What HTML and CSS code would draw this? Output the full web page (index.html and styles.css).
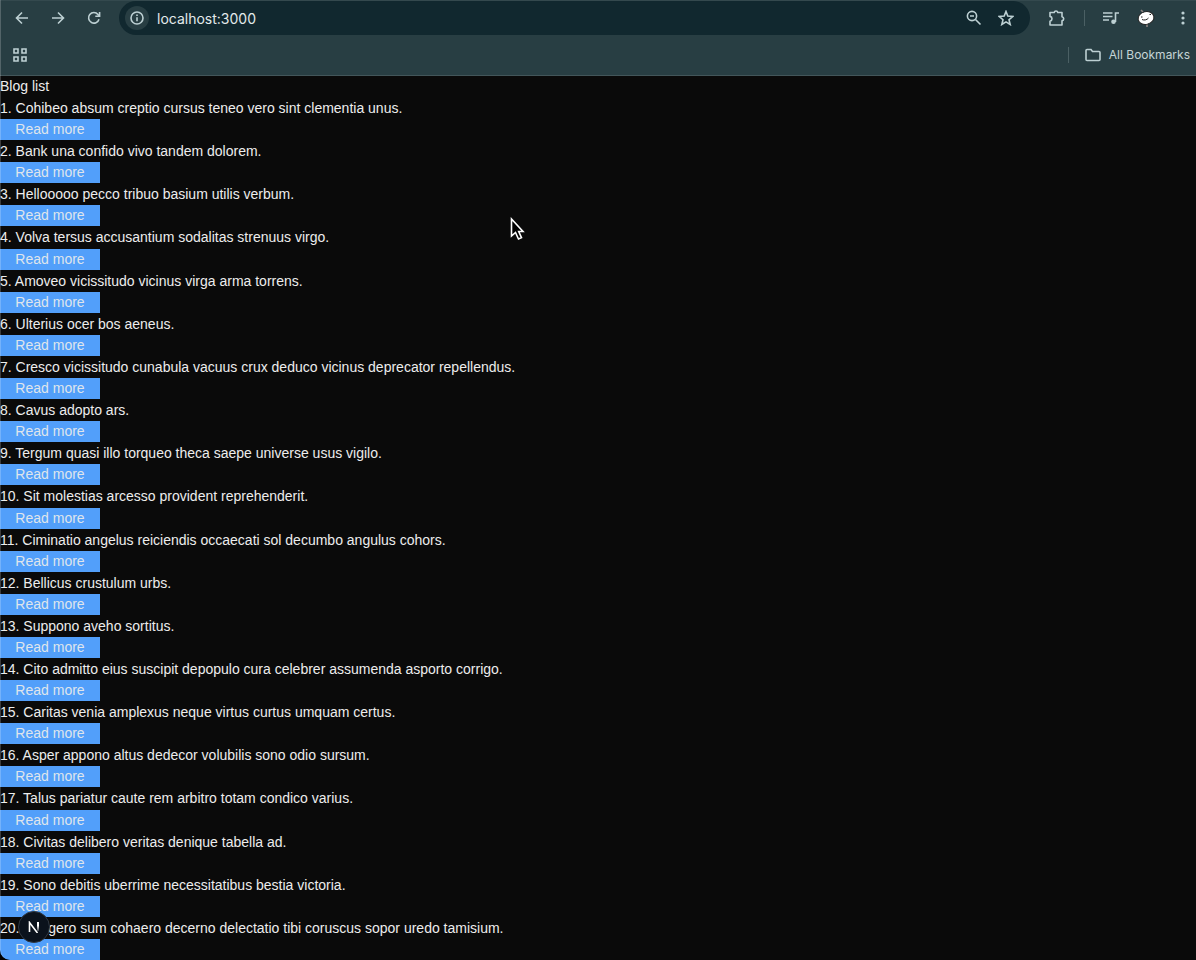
FILE: index.html
```html
<!DOCTYPE html>
<html lang="en">
<head>
<meta charset="utf-8">
<title>Blog list</title>
<link rel="stylesheet" href="styles.css">
</head>
<body>
<div class="window">
  <header class="chrome">
    <div class="toolbar">
      <nav class="nav" aria-label="History">
        <button class="icon-btn" aria-label="Back"><svg width="14" height="14" viewBox="0 0 14 14"><path d="M13 7H2M7 1.500 1.500 7 7 12.500"/></svg></button>
        <button class="icon-btn" aria-label="Forward"><svg width="14" height="14" viewBox="0 0 14 14"><path d="M1 7h11M7 1.500 12.500 7 7 12.500"/></svg></button>
        <button class="icon-btn" aria-label="Reload"><svg width="14" height="14" viewBox="0 0 14 14"><path d="M12 8.200A5.300 5.300 0 1 1 11 3.500L12.500 5M12.600 1v4.300H8.300"/></svg></button>
      </nav>
      <div class="omnibox">
        <button class="site-info" aria-label="View site information"><svg width="14" height="14" viewBox="0 0 14 14"><circle cx="7" cy="7" r="6"/><path d="M7 6.300v4M7 3.500v1.600"/></svg></button>
        <input class="address" type="text" aria-label="Address" value="localhost:3000">
        <button class="icon-btn" aria-label="Zoom"><svg width="16" height="16" viewBox="0 0 16 16"><circle cx="6" cy="6" r="4.600"/><path d="m9.500 9.500 5 5M4 6h4"/></svg></button>
        <button class="icon-btn" aria-label="Bookmark this tab"><svg width="16" height="16" viewBox="0 0 16 16"><path d="m8 1.500 1.800 4.600 4.900.4-3.700 3.200 1.200 4.800L8 11.900l-4.200 2.600L5 9.700 1.300 6.500l4.900-.4z"/></svg></button>
      </div>
      <div class="tools">
        <button class="icon-btn" aria-label="Extensions"><svg width="18" height="18" viewBox="0 0 18 18"><path d="M2 3.500h4.200q.3-1.500 1.800-1.500t1.800 1.500H14v4.200q1.700.3 1.700 2T14 11.700V16H2v-3.800q2-.5 2-2.400T2 7.400z" stroke-linejoin="round"/></svg></button>
        <span class="divider"></span>
        <button class="icon-btn" aria-label="Media controls"><svg width="16" height="14" viewBox="0 0 16 14"><path d="M0 2h9.500M0 5.500h9.500M0 9h6M12.500 11V2H16"/><circle class="solid" cx="10.500" cy="10.700" r="2.300"/></svg></button>
        <button class="icon-btn" aria-label="Profile"><svg width="18" height="18" viewBox="0 0 18 18"><path class="leaf" d="m4 1 2 2M10 14v4"/><ellipse class="face" cx="9" cy="9" rx="8" ry="6.300" transform="rotate(-14 9 9)"/><path class="smile" d="M5 10.500c2 1 5 .5 6.500-1.500M4 8h1.500M12.500 5.500h1.500"/></svg></button>
      </div>
      <button class="icon-btn menu" aria-label="Menu"><svg width="4" height="14" viewBox="0 0 4 14"><g class="solid"><circle cx="2" cy="2" r="1.600"/><circle cx="2" cy="7" r="1.600"/><circle cx="2" cy="12" r="1.600"/></g></svg></button>
    </div>
    <div class="bookmarks">
      <button class="icon-btn" aria-label="Apps"><svg width="14" height="14" viewBox="0 0 14 14"><path d="M1 1h4v4H1zM9 1h4v4H9zM1 9h4v4H1zM9 9h4v4H9z"/></svg></button>
      <span class="spacer"></span>
      <span class="divider"></span>
      <button class="all-bookmarks"><svg width="16" height="14" viewBox="0 0 16 14"><path d="M1 11.500v-9q0-1 1-1h4l1.500 2H14q1 0 1 1v7q0 1-1 1H2q-1 0-1-1z"/></svg>All Bookmarks</button>
    </div>
  </header>
  <main class="page">
    <h1 class="title">Blog list</h1>
    <div class="posts">
      <article class="post"><p>1. Cohibeo absum creptio cursus teneo vero sint clementia unus.</p><button class="more">Read more</button></article>
      <article class="post"><p>2. Bank una confido vivo tandem dolorem.</p><button class="more">Read more</button></article>
      <article class="post"><p>3. Hellooooo pecco tribuo basium utilis verbum.</p><button class="more">Read more</button></article>
      <article class="post"><p>4. Volva tersus accusantium sodalitas strenuus virgo.</p><button class="more">Read more</button></article>
      <article class="post"><p>5. Amoveo vicissitudo vicinus virga arma torrens.</p><button class="more">Read more</button></article>
      <article class="post"><p>6. Ulterius ocer bos aeneus.</p><button class="more">Read more</button></article>
      <article class="post"><p>7. Cresco vicissitudo cunabula vacuus crux deduco vicinus deprecator repellendus.</p><button class="more">Read more</button></article>
      <article class="post"><p>8. Cavus adopto ars.</p><button class="more">Read more</button></article>
      <article class="post"><p>9. Tergum quasi illo torqueo theca saepe universe usus vigilo.</p><button class="more">Read more</button></article>
      <article class="post"><p>10. Sit molestias arcesso provident reprehenderit.</p><button class="more">Read more</button></article>
      <article class="post"><p>11. Ciminatio angelus reiciendis occaecati sol decumbo angulus cohors.</p><button class="more">Read more</button></article>
      <article class="post"><p>12. Bellicus crustulum urbs.</p><button class="more">Read more</button></article>
      <article class="post"><p>13. Suppono aveho sortitus.</p><button class="more">Read more</button></article>
      <article class="post"><p>14. Cito admitto eius suscipit depopulo cura celebrer assumenda asporto corrigo.</p><button class="more">Read more</button></article>
      <article class="post"><p>15. Caritas venia amplexus neque virtus curtus umquam certus.</p><button class="more">Read more</button></article>
      <article class="post"><p>16. Asper appono altus dedecor volubilis sono odio sursum.</p><button class="more">Read more</button></article>
      <article class="post"><p>17. Talus pariatur caute rem arbitro totam condico varius.</p><button class="more">Read more</button></article>
      <article class="post"><p>18. Civitas delibero veritas denique tabella ad.</p><button class="more">Read more</button></article>
      <article class="post"><p>19. Sono debitis uberrime necessitatibus bestia victoria.</p><button class="more">Read more</button></article>
      <article class="post"><p>20. Suggero sum cohaero decerno delectatio tibi coruscus sopor uredo tamisium.</p><button class="more">Read more</button></article>
    </div>
  </main>
  <button class="dev-badge" aria-label="Open Next.js Dev Tools"><svg width="14" height="12" viewBox="0 0 14 12"><defs><linearGradient id="fade" x1="0" y1="0" x2="0" y2="1"><stop offset=".4" stop-color="#fff"/><stop offset="1" stop-color="#fff" stop-opacity=".2"/></linearGradient></defs><path d="M2.500 11V1.500L10.500 12"/><rect class="stem" x="10" y="1" width="2" height="9" fill="url(#fade)"/></svg></button>
  <svg class="cursor" width="16" height="24" viewBox="0 0 16 24" aria-hidden="true"><path d="M1.500 2v17l4-3.500 3 6.500 3-1.300-2.800-6.200H13z"/></svg>
</div>
</body>
</html>
```
FILE: styles.css
```css
* { box-sizing: border-box; }

body {
  margin: 0;
  background: #000;
  color: #ededed;
  font-family: "Liberation Sans", Arial, sans-serif;
  font-size: 14px;
}

button, input {
  border: 0;
  padding: 0;
  background: none;
  color: inherit;
  font: inherit;
}

svg {
  display: block;
  fill: none;
  stroke: #bdd0d3;
  stroke-width: 1.600;
}

.solid { fill: #bdd0d3; stroke: none; }

.window {
  position: relative;
  display: flex;
  flex-direction: column;
  min-height: 100vh;
  overflow: hidden;
  border-bottom-left-radius: 10px;
  background: #0a0a0a;
}

.window::after {
  content: "";
  position: absolute;
  inset: 0;
  border-left: 1px solid rgba(255, 255, 255, 0.2);
  border-radius: inherit;
  pointer-events: none;
}

.chrome {
  border-top: 1px solid #34494e;
  border-bottom: 1px solid #43565a;
  background: #283e43;
  font-family: Inter, "Open Sans", sans-serif;
}

.toolbar {
  display: flex;
  align-items: center;
  gap: 18px;
  height: 34px;
  padding-right: 11px;
}

.nav {
  display: flex;
  gap: 22px;
  padding-left: 15px;
}

.icon-btn { flex: none; }

.omnibox {
  display: flex;
  flex: 1;
  align-items: center;
  gap: 16px;
  height: 34px;
  padding: 0 16px 0 6px;
  border-radius: 17px;
  background: #11282f;
}

.site-info {
  display: grid;
  place-items: center;
  width: 24px;
  height: 24px;
  border-radius: 50%;
  background: #283e43;
}

.address {
  flex: 1;
  min-width: 0;
  margin-left: -8px;
  color: #e3eaeb;
  font-size: 14px;
}

.tools {
  display: flex;
  align-items: center;
  gap: 18px;
}

.menu { margin-left: 8px; }

.divider {
  width: 1px;
  height: 16px;
  background: #4b6064;
}

.bookmarks {
  display: flex;
  align-items: center;
  gap: 16px;
  height: 40px;
  padding: 0 6px 0 13px;
}

.spacer { flex: 1; }

.all-bookmarks {
  display: flex;
  align-items: center;
  gap: 8px;
  color: #c5d4d6;
  font-size: 12px;
  line-height: 16px;
}

.page {
  display: flex;
  flex: 1;
  flex-direction: column;
}

.title {
  margin: 0;
  font-size: 14px;
  font-weight: 400;
  line-height: 21px;
}

.posts {
  display: grid;
  flex: 1;
  grid-auto-rows: 1fr;
}

.post {
  display: flex;
  flex-direction: column;
  align-items: flex-start;
}

.post p {
  flex: 1;
  margin: 0;
  line-height: 22px;
}

.more {
  width: 100px;
  line-height: 21px;
  background: #529ffa;
  color: #dfe5ec;
}

.dev-badge {
  position: absolute;
  bottom: 17px;
  left: 18px;
  display: grid;
  place-items: center;
  width: 32px;
  height: 32px;
  border: 1px solid #303842;
  border-radius: 50%;
  background: #0b121c;
}

.dev-badge svg { stroke: #fff; }
.dev-badge .stem { stroke: none; }

.leaf { stroke: #8c8281; }
.face { fill: #fff; stroke: #222; stroke-width: 1; }
.smile { stroke: #222; stroke-width: 1; }

.cursor {
  position: absolute;
  top: 217px;
  left: 510px;
  fill: #000;
  stroke: #fff;
  pointer-events: none;
}
```
